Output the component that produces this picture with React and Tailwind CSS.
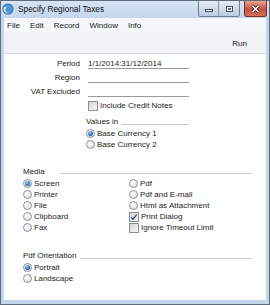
import React from 'react'

const Radio = ({ checked }) => (
  <span className="w-[9px] h-[9px] rounded-full border border-[#8c9097] bg-[radial-gradient(circle_at_35%_30%,#ffffff,#d9dbde)] flex items-center justify-center shrink-0">
    {checked && (
      <span className="w-[5px] h-[5px] rounded-full bg-[radial-gradient(circle_at_40%_35%,#8fd0ff,#1a5fae_70%)]" />
    )}
  </span>
)

const Check = ({ checked }) => (
  <span className="w-[10px] h-[10px] border border-[#8e8f8f] bg-[linear-gradient(135deg,#d6d7d9,#f7f7f8)] flex items-center justify-center shrink-0">
    {checked && (
      <svg width="8" height="8" viewBox="0 0 8 8">
        <path d="M1.2 4.2 L3 6.2 L6.8 1.3" fill="none" stroke="#2a4a8a" strokeWidth="1.3" />
      </svg>
    )}
  </span>
)

const Opt = ({ kind = 'radio', checked, children }) => (
  <div className="h-[11px] flex items-center gap-[2px]">
    {kind === 'radio' ? <Radio checked={checked} /> : <Check checked={checked} />}
    <span className="leading-[11px]">{children}</span>
  </div>
)

const Field = ({ label, value }) => (
  <div className="h-[14px] flex items-start">
    <span className="w-[76px] text-right leading-[11px]">{label}</span>
    <div className="ml-[8px] w-[101px] h-[11px] border-b border-[#9a9a9a] leading-[11px]">{value}</div>
  </div>
)

export default function App() {
  return (
    <div className="w-[270px] h-[305px] border border-[#5d6b7b] bg-[#c3d6ec] flex flex-col font-['Liberation_Sans',sans-serif] text-[8px] text-[#1b1b1b] overflow-hidden">
      {/* title bar */}
      <div className="h-[17px] flex items-start bg-[linear-gradient(#d6e4f4,#c3d6ec)]">
        <svg className="ml-[1px] mt-[2px]" width="12" height="12" viewBox="0 0 12 12">
          <circle cx="6" cy="6" r="5.6" fill="#2d6fb8" />
          <circle cx="6" cy="6" r="4.6" fill="#4f95d8" />
          <path d="M3 3.5 A4 4 0 0 0 8.5 9.3 A3.2 3.2 0 0 1 4.6 4.2 Z" fill="#ffffff" />
        </svg>
        <span className="ml-[4px] mt-[3px] leading-[11px] text-[8.3px] text-[#111]">Specify Regional Taxes</span>
        <div className="ml-auto mr-[2px] flex items-start">
          <div className="flex h-[16px] border border-t-0 border-[#6f7f93] rounded-b-[3px] overflow-hidden">
            <div className="w-[20px] h-full bg-[linear-gradient(#e4ecf6,#b9cbe0)] border-r border-[#8798ad] flex items-center justify-center">
              <span className="mt-[4px] w-[8px] h-[3px] bg-white border border-[#3d4d63]" />
            </div>
            <div className="w-[20px] h-full bg-[linear-gradient(#e4ecf6,#b9cbe0)] flex items-center justify-center">
              <span className="w-[7px] h-[6px] bg-white border border-[#3d4d63] flex items-center justify-center">
                <span className="w-[3px] h-[2px] bg-[#5a6b80]" />
              </span>
            </div>
          </div>
          <div className="ml-[4px] w-[23px] h-[16px] border border-t-0 border-[#7a2d25] rounded-b-[3px] bg-[linear-gradient(#e9a393,#c9503f_55%,#d5705c)] flex items-center justify-center">
            <svg width="9" height="8" viewBox="0 0 9 8">
              <path d="M1.5 1 L7.5 7 M7.5 1 L1.5 7" stroke="#3b1611" strokeWidth="3" />
              <path d="M1.5 1 L7.5 7 M7.5 1 L1.5 7" stroke="#ffffff" strokeWidth="1.6" />
            </svg>
          </div>
        </div>
      </div>

      <div className="flex-1 flex flex-col px-[3px] pb-[4px]">
        {/* menu */}
        <div className="h-[14px] bg-[#f5f7fa] flex items-center gap-[10px] pl-[3px] leading-[11px]">
          <span>File</span>
          <span>Edit</span>
          <span>Record</span>
          <span>Window</span>
          <span>Info</span>
        </div>

        {/* toolbar */}
        <div className="h-[22px] bg-[#f1f1f6] border-b border-[#d6d6dc] flex items-center justify-end pr-[19px]">
          <span className="leading-[11px] mt-[1px]">Run</span>
        </div>

        {/* body */}
        <div className="flex-1 bg-white flex flex-col pt-[4px]">
          <Field label="Period" value="1/1/2014:31/12/2014" />
          <Field label="Region" value="" />
          <Field label="VAT Excluded" value="" />
          <div className="ml-[84px]">
            <Opt kind="check">Include Credit Notes</Opt>
          </div>

          <div className="ml-[82px] w-[103px] mt-[5px] h-[11px] flex items-start">
            <span className="leading-[11px]">Values in</span>
            <div className="ml-[4px] mt-[8px] flex-1 h-px bg-[#c8c8c8]" />
          </div>
          <div className="ml-[82px] mt-[1px]">
            <Opt checked>Base Currency 1</Opt>
            <Opt>Base Currency 2</Opt>
          </div>

          <div className="ml-[19px] mr-[14px] mt-[16px] h-[11px] flex items-start">
            <span className="w-[37px] leading-[11px]">Media</span>
            <div className="mt-[7px] flex-1 h-px bg-[#c8c8c8]" />
          </div>
          <div className="ml-[19px] mt-[1px] flex">
            <div className="w-[106px]">
              <Opt checked>Screen</Opt>
              <Opt>Printer</Opt>
              <Opt>File</Opt>
              <Opt>Clipboard</Opt>
              <Opt>Fax</Opt>
            </div>
            <div>
              <Opt>Pdf</Opt>
              <Opt>Pdf and E-mail</Opt>
              <Opt>Html as Attachment</Opt>
              <Opt kind="check" checked>Print Dialog</Opt>
              <Opt kind="check">Ignore Timeout Limit</Opt>
            </div>
          </div>

          <div className="ml-[19px] mr-[14px] mt-[17px] h-[11px] flex items-start">
            <span className="leading-[11px]">Pdf Orientation</span>
            <div className="ml-[4px] mt-[8px] flex-1 h-px bg-[#c8c8c8]" />
          </div>
          <div className="ml-[19px] mt-[1px]">
            <Opt checked>Portrait</Opt>
            <Opt>Landscape</Opt>
          </div>
        </div>
      </div>
    </div>
  )
}
